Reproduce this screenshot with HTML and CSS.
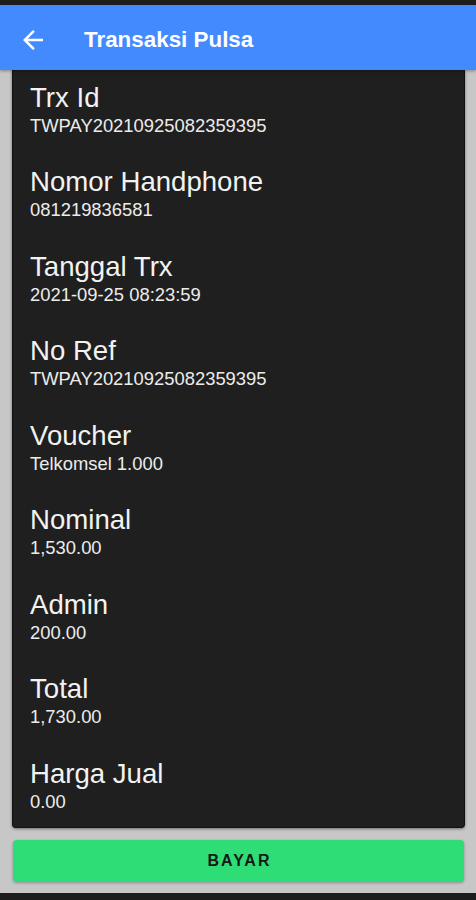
FILE: index.html
```html
<!DOCTYPE html>
<html lang="id">
<head>
<meta charset="utf-8">
<title>Transaksi Pulsa</title>
<link rel="stylesheet" href="styles.css">
</head>
<body>
<div class="screen">
  <div class="statusbar"></div>
  <header class="appbar">
    <svg class="back" viewBox="0 0 24 24" width="30" height="30" aria-hidden="true">
      <path d="M20 11H7.83l5.59-5.59L12 4l-8 8 8 8 1.41-1.41L7.83 13H20v-2z" fill="#ffffff"/>
    </svg>
    <h1 class="title">Transaksi Pulsa</h1>
  </header>
  <main class="content">
    <section class="card">
      <div class="row"><div class="label">Trx Id</div><div class="value">TWPAY20210925082359395</div></div>
      <div class="row"><div class="label">Nomor Handphone</div><div class="value">081219836581</div></div>
      <div class="row"><div class="label">Tanggal Trx</div><div class="value">2021-09-25 08:23:59</div></div>
      <div class="row"><div class="label">No Ref</div><div class="value">TWPAY20210925082359395</div></div>
      <div class="row"><div class="label">Voucher</div><div class="value">Telkomsel 1.000</div></div>
      <div class="row"><div class="label">Nominal</div><div class="value">1,530.00</div></div>
      <div class="row"><div class="label">Admin</div><div class="value">200.00</div></div>
      <div class="row"><div class="label">Total</div><div class="value">1,730.00</div></div>
      <div class="row"><div class="label">Harga Jual</div><div class="value">0.00</div></div>
    </section>
    <button class="pay" type="button">BAYAR</button>
  </main>
  <div class="navbar"></div>
</div>
</body>
</html>
```

FILE: styles.css
```css
html, body {
  margin: 0;
  padding: 0;
}

body {
  background: #c8c7c7;
  font-family: "Liberation Sans", Arial, Helvetica, sans-serif;
}

.screen {
  width: 476px;
  height: 900px;
  display: flex;
  flex-direction: column;
  overflow: hidden;
}

.statusbar {
  height: 5px;
  background: #1e1d1d;
  flex: none;
}

.appbar {
  height: 65px;
  flex: none;
  background: #448aff;
  display: flex;
  align-items: center;
  padding-left: 18px;
  padding-top: 4px;
  box-sizing: border-box;
  position: relative;
  z-index: 2;
  box-shadow: 0 1px 3px rgba(0, 0, 0, 0.35);
}

.back {
  display: block;
  flex: none;
}

.title {
  margin: 0 0 0 36px;
  color: #ffffff;
  font-size: 22.4px;
  font-weight: 700;
  line-height: 26px;
}

.content {
  flex: 1;
  display: flex;
  flex-direction: column;
  padding: 0 12px 0 13px;
}

.card {
  background: #1f1f1f;
  border-radius: 0 0 4px 4px;
  padding: 12.5px 17px 12px;
  display: flex;
  flex-direction: column;
  gap: 28.5px;
  box-shadow: 0 1px 3px rgba(0, 0, 0, 0.45);
  border: 1px solid #111;
  border-top: none;
  margin: 0 -1px;
}

.row {
  display: flex;
  flex-direction: column;
}

.label {
  color: #f2f2f2;
  font-size: 27.6px;
  line-height: 30px;
}

.value {
  color: #ececec;
  font-size: 18.4px;
  line-height: 26px;
}

.pay {
  margin-top: 12px;
  height: 42px;
  border: none;
  border-radius: 4px;
  background: #2edd76;
  color: #141a16;
  font-family: "Liberation Sans", Arial, Helvetica, sans-serif;
  font-size: 16px;
  font-weight: 700;
  letter-spacing: 2px;
  padding: 0 0 0 2px;
  box-shadow: 0 1px 3px rgba(0, 0, 0, 0.3);
}

.navbar {
  height: 7px;
  flex: none;
  margin-top: 11px;
  background: #1e1d1d;
}
```
